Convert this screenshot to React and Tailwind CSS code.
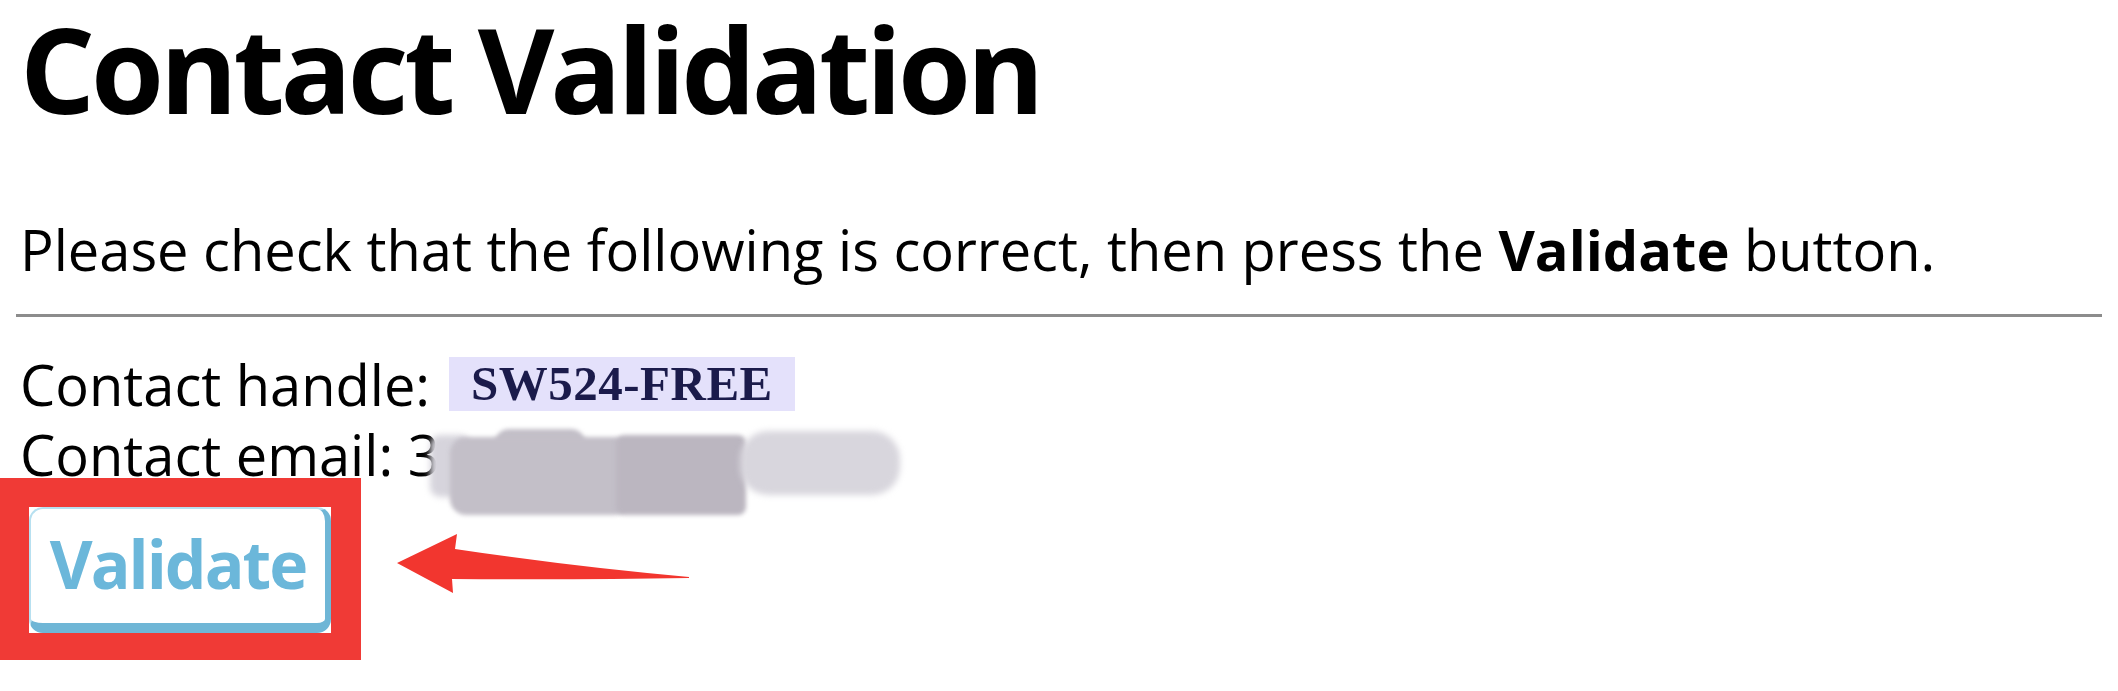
import React from "react"

export default function App(){

return(

<div className="bg-white min-h-[691px] w-[2118px] overflow-hidden px-[16px] font-['Open_Sans',sans-serif] text-black">

{/* HEADING */}
<h1 className="text-[118px] font-bold leading-[1.15] pt-[1px] pl-[4px] tracking-[-0.035em]">
Contact Validation
</h1>

{/* INTRO */}
<p className="text-[56px] leading-[1.2] mt-[79px] pl-[4px]">
Please check that the following is correct, then press the <b>Validate</b> button.
</p>

<hr className="mt-[31px] border-0 border-t-[3px] border-[#8c8c8c]" />

{/* DETAILS */}
<div className="pl-[4px] text-[56px] leading-[70px] mt-[32px]">

<div className="flex items-center">
<span>Contact handle:</span>
<span className="ml-[19px] bg-[#e4e1fb] px-[22px] h-[54px] flex items-center font-['Liberation_Serif',serif] font-bold text-[49px] text-[#1b1b4b] tracking-[0.01em]">
SW524-FREE
</span>
</div>

<div className="relative h-[70px]">
<span>Contact email: 3</span>

{/* blurred address (overlay) */}
<div className="absolute left-[410px] top-[10px] flex items-start">
<div className="w-[40px] h-[62px] mt-[6px] bg-[#d6d4dc] rounded-[10px] blur-[3px]" />
<div className="flex flex-col items-center -ml-[20px]">
<div className="w-[90px] h-[30px] bg-[#c3bfc8] rounded-[14px] blur-[2px]" />
<div className="w-[180px] h-[78px] -mt-[22px] bg-[#c3bfc8] rounded-[16px] blur-[2px]" />
</div>
<div className="w-[130px] h-[80px] mt-[6px] -ml-[14px] bg-[#bbb6c0] rounded-[8px] blur-[2px]" />
<div className="w-[160px] h-[64px] mt-[2px] -ml-[6px] bg-[#d8d6dd] rounded-[28px] blur-[3px]" />
</div>
</div>

</div>

{/* VALIDATE BUTTON + ANNOTATION */}
<div className="flex items-center -ml-[16px] -mt-[11px]">

<div className="border-[#f03a36] border-[29px] border-r-[30px] border-b-[27px] bg-white">
<button className="w-[302px] h-[126px] bg-white rounded-[14px] border-t-[2px] border-l-[2px] border-r-[6px] border-b-[10px] border-t-[#b7e0f0] border-l-[#b7e0f0] border-r-[#6fb6d6] border-b-[#6fb6d6] text-[#6bb7da] font-bold text-[66px] tracking-[-0.03em] flex items-center justify-center pb-[4px]">
Validate
</button>
</div>

<svg width="300" height="70" viewBox="0 0 300 70" className="ml-[34px] mt-[-6px]">
<path d="M2 32 L62 3 L60 18 Q180 36 294 46 L294 47 Q180 49 57 48 L58 62 Z" fill="#f2362f" />
</svg>

</div>

</div>

)

}
